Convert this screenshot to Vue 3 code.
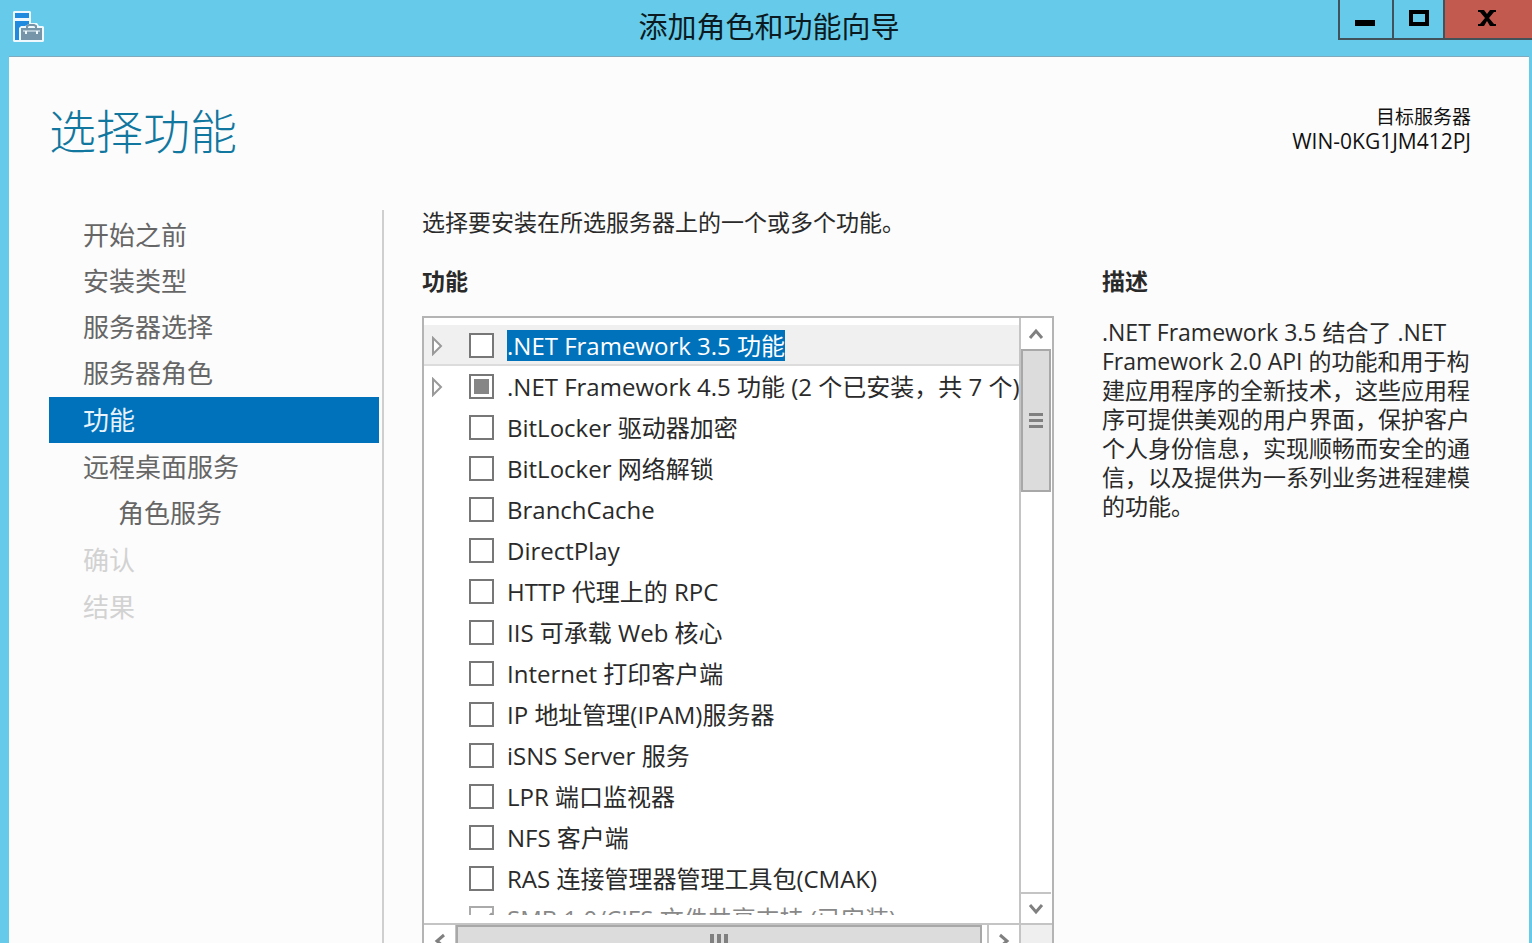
<script setup>
import { ref } from 'vue'

const steps = [
  { label: '开始之前' },
  { label: '安装类型' },
  { label: '服务器选择' },
  { label: '服务器角色' },
  { label: '功能', state: 'active' },
  { label: '远程桌面服务' },
  { label: '角色服务', state: 'nested' },
  { label: '确认', state: 'disabled' },
  { label: '结果', state: 'disabled' },
]

const features = ref([
  { name: '.NET Framework 3.5 功能', expandable: true, selected: true },
  { name: '.NET Framework 4.5 功能 (2 个已安装，共 7 个)', expandable: true, partial: true },
  { name: 'BitLocker 驱动器加密' },
  { name: 'BitLocker 网络解锁' },
  { name: 'BranchCache' },
  { name: 'DirectPlay' },
  { name: 'HTTP 代理上的 RPC' },
  { name: 'IIS 可承载 Web 核心' },
  { name: 'Internet 打印客户端' },
  { name: 'IP 地址管理(IPAM)服务器' },
  { name: 'iSNS Server 服务' },
  { name: 'LPR 端口监视器' },
  { name: 'NFS 客户端' },
  { name: 'RAS 连接管理器管理工具包(CMAK)' },
  { name: 'SMB 1.0/CIFS 文件共享支持 (已安装)', checked: true, disabled: true },
])

const description = [
  '.NET Framework 3.5 结合了 .NET',
  'Framework 2.0 API 的功能和用于构',
  '建应用程序的全新技术，这些应用程',
  '序可提供美观的用户界面，保护客户',
  '个人身份信息，实现顺畅而安全的通',
  '信，以及提供为一系列业务进程建模',
  '的功能。',
].join('\n')
</script>

<template>
  <div class="window">
    <header class="titlebar">
      <svg class="app-icon" width="32" height="32" viewBox="0 0 32 32" aria-hidden="true">
        <path d="M1 0h16l1 1v11h6l2 3h4l1 1v14l-1 1H1l-1-1V1z" fill="#eef8fd" />
        <path d="M2 2h14v5H2zM2 10h14v3l-4 2H8l-2 2v12H2z" fill="#1f8ade" />
        <path d="M8 17h21v12H8z" fill="#7795a8" />
        <path d="M14 17v-2l2-1h5l2 1v2" fill="none" stroke="#7795a8" stroke-width="2" />
        <path d="M10 20h17" fill="none" stroke="#eef8fd" stroke-width="1" />
        <path d="M13 20v3M24 20v3" fill="none" stroke="#eef8fd" stroke-width="2" />
      </svg>
      <div class="title">添加角色和功能向导</div>
      <div class="controls">
        <button class="ctl min" type="button" aria-label="最小化">
          <svg width="20" height="16" viewBox="0 0 20 16"><path d="M0 10h20v6H0z" /></svg>
        </button>
        <button class="ctl max" type="button" aria-label="最大化">
          <svg width="20" height="16" viewBox="0 0 20 16">
            <path d="M2 2h16v12H2z" fill="none" stroke="#000" stroke-width="4" />
          </svg>
        </button>
        <button class="ctl close" type="button" aria-label="关闭">
          <svg width="18" height="16" viewBox="0 0 18 16">
            <path d="M0 0h6l3 4 3-4h6v2h-2l-5 6 5 6h2v2h-6l-3-5-3 5H0v-2h2l5-6-5-6H0z" />
          </svg>
        </button>
      </div>
    </header>

    <main class="page">
      <div class="heading">
        <h1>选择功能</h1>
        <div class="target">
          <div>目标服务器</div>
          <div class="host">WIN-0KG1JM412PJ</div>
        </div>
      </div>

      <div class="columns">
        <nav class="steps">
          <a v-for="s in steps" :key="s.label" href="#" class="step" :class="s.state">{{ s.label }}</a>
        </nav>

        <div class="body">
          <p class="intro">选择要安装在所选服务器上的一个或多个功能。</p>
          <div class="panes">
            <section class="list-pane">
              <h2>功能</h2>
              <div class="tree">
                <div class="view">
                  <ul class="rows">
                    <li v-for="(f, i) in features" :key="f.name" class="row" :class="{ selected: f.selected, off: f.disabled }">
                      <span class="arrow">
                        <svg v-if="f.expandable" width="11" height="20" viewBox="0 0 11 20">
                          <path d="M1 2v16l8-8z" fill="#fff" stroke="#999" stroke-width="2" />
                        </svg>
                      </span>
                      <input :id="'feature-' + i" v-model="f.checked" type="checkbox" class="box" :class="{ partial: f.partial }" :disabled="f.disabled" />
                      <label :for="'feature-' + i">{{ f.name }}</label>
                    </li>
                  </ul>
                </div>
                <div class="vbar">
                  <button type="button" class="sb up" aria-label="向上滚动">
                    <svg width="16" height="12" viewBox="0 0 16 12"><path d="M2 10l6-7 6 7" /></svg>
                  </button>
                  <div class="vthumb"><i></i><i></i><i></i></div>
                  <button type="button" class="sb down" aria-label="向下滚动">
                    <svg width="16" height="12" viewBox="0 0 16 12"><path d="M2 2l6 7 6-7" /></svg>
                  </button>
                </div>
                <div class="hbar">
                  <button type="button" class="sb left" aria-label="向左滚动">
                    <svg width="12" height="16" viewBox="0 0 12 16"><path d="M10 2L3 8l7 6" /></svg>
                  </button>
                  <div class="hthumb"><i></i><i></i><i></i></div>
                  <button type="button" class="sb right" aria-label="向右滚动">
                    <svg width="12" height="16" viewBox="0 0 12 16"><path d="M2 2l7 6-7 6" /></svg>
                  </button>
                </div>
                <div class="corner"></div>
              </div>
            </section>

            <section class="info">
              <h2>描述</h2>
              <p class="desc">{{ description }}</p>
            </section>
          </div>
        </div>
      </div>
    </main>
  </div>
</template>

<style>
body {
  background: #66cbea;
  overflow: hidden;
}
</style>

<style scoped>
* {
  box-sizing: border-box;
}
.window {
  display: flex;
  flex-direction: column;
  height: 100vh;
  overflow: hidden;
  background: #66cbea;
  color: #2a2a2a;
  font-family: 'Open Sans', 'Noto Sans CJK SC', sans-serif;
  font-size: 23px;
}
h1, h2, p, ul {
  margin: 0;
  padding: 0;
}
button {
  padding: 0;
  margin: 0;
}

.titlebar {
  display: grid;
  grid-template-columns: 200px 1fr 194px;
  height: 56px;
  flex: none;
}
.app-icon {
  margin: 11px 0 0 13px;
}
.title {
  text-align: center;
  font-size: 29px;
  line-height: 54px;
  color: #0b1a20;
}
.controls {
  display: flex;
  height: 40px;
}
.ctl {
  display: flex;
  align-items: flex-start;
  justify-content: center;
  padding: 10px 3px 0 0;
  border: 2px solid #42525a;
  border-top: 0;
  border-right: 0;
  background: #66cbea;
}
.min {
  width: 54px;
}
.max {
  width: 51px;
  padding-right: 0;
}
.close {
  flex: 1;
  background: #c35a50;
}

.page {
  flex: 1;
  min-height: 0;
  margin: 0 3px 0 9px;
  padding: 41px 46px 0 40px;
  border-top: 1px solid #7fa9bd;
  background: #fcfcfc;
}
.heading {
  display: flex;
  justify-content: space-between;
  height: 112px;
}
h1 {
  font-size: 47px;
  line-height: 66px;
  font-weight: 300;
  color: #11779f;
}
.target {
  padding: 7px 12px 0 0;
  font-size: 19px;
  line-height: 24px;
  text-align: right;
  color: #111;
}
.host {
  font-size: 21px;
}
.columns {
  display: flex;
}
.steps {
  flex: none;
  width: 335px;
  height: 800px;
  padding: 2px 3px 0 0;
  border-right: 2px solid #cfcfcf;
}
.step {
  display: block;
  height: 46px;
  padding-left: 34px;
  font-size: 26px;
  line-height: 46px;
  color: #666;
  text-decoration: none;
}
.step.active {
  margin: 1px 0;
  background: #0072bc;
  color: #e8f3fb;
}
.step.nested {
  padding-left: 69px;
}
.step.disabled {
  margin-top: 1px;
  color: #d2d2d2;
}

.body {
  flex: 1;
  min-width: 0;
  padding-left: 38px;
}
.intro {
  line-height: 25px;
}
.panes {
  display: flex;
  gap: 48px;
  margin-top: 29px;
}
h2 {
  font-size: 23px;
  line-height: 34px;
  font-weight: 700;
}
.list-pane {
  flex: 1;
  min-width: 0;
}
.info {
  flex: none;
  width: 381px;
}
.desc {
  margin-top: 20px;
  line-height: 29px;
  white-space: pre;
}

.tree {
  display: grid;
  grid-template-columns: 1fr 33px;
  grid-template-rows: 607px 32px;
  margin-top: 18px;
  border: 2px solid #b4b4b4;
  background: #fff;
}
.view {
  min-width: 0;
  padding-top: 7px;
  border-bottom: 2px solid #c4c4c4;
}
.rows {
  height: 590px;
  overflow: hidden;
  list-style: none;
  font-size: 24px;
}
.row {
  display: flex;
  align-items: center;
  height: 41px;
  white-space: nowrap;
}
.row.selected {
  background: #f0f0f0;
  box-shadow: inset 0 -2px #dcdcdc;
}
.arrow {
  display: flex;
  flex: none;
  width: 45px;
  padding-left: 8px;
}
.box {
  appearance: none;
  flex: none;
  display: grid;
  place-content: center;
  width: 25px;
  height: 25px;
  margin: 0 13px 0 0;
  border: 2px solid #777;
  background: #fff;
}
.box.partial::before {
  content: '';
  width: 15px;
  height: 15px;
  background: #868686;
}
.box:checked::before {
  content: '';
  width: 9px;
  height: 18px;
  border: solid #999;
  border-width: 0 3px 3px 0;
  transform: rotate(40deg);
}
.row label {
  line-height: 31px;
}
.row.selected label {
  background: #0072bc;
  color: #fff;
}
.row.off {
  height: 38px;
}
.row.off label {
  color: #888;
}
.row.off .box {
  border-color: #aaa;
}

.sb {
  display: flex;
  align-items: center;
  justify-content: center;
  flex: none;
  border: 0 solid #c4c4c4;
  background: #fff;
}
.sb path {
  fill: none;
  stroke: #808080;
  stroke-width: 3;
}
.vbar {
  display: flex;
  flex-direction: column;
  padding-right: 1px;
  border-left: 2px solid #c4c4c4;
  border-bottom: 2px solid #c4c4c4;
}
.up,
.down {
  height: 31px;
}
.down {
  margin-top: auto;
  border-top-width: 2px;
}
.vthumb {
  display: flex;
  flex-direction: column;
  align-items: center;
  justify-content: center;
  gap: 3px;
  height: 143px;
  border: 2px solid #a8a8a8;
  background: #dcdcdc;
}
.vthumb i {
  width: 14px;
  height: 3px;
  background: #808080;
}
.hbar {
  display: flex;
}
.left,
.right {
  width: 32px;
}
.left {
  border-right-width: 1px;
}
.right {
  margin-left: 5px;
  border-left-width: 2px;
}
.hthumb {
  flex: 1;
  display: flex;
  align-items: center;
  justify-content: center;
  gap: 3px;
  border: 2px solid #a8a8a8;
  background: #dcdcdc;
}
.hthumb i {
  width: 4px;
  height: 14px;
  background: #808080;
}
.corner {
  border-left: 2px solid #c4c4c4;
  background: #efefef;
}
</style>
